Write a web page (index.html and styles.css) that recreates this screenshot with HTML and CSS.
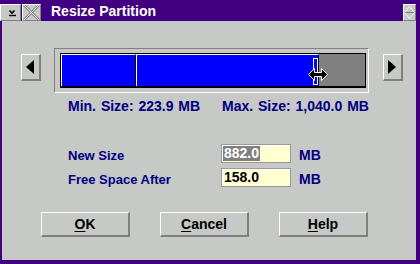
FILE: index.html
```html
<html>
<head>
<meta charset="utf-8" />
<title>Resize Partition</title>
<link rel="stylesheet" href="styles.css">
</head>
<body>
<div class="window">
	<div class="titlebar">
		<span class="tbtn sysmenu"><svg width="19" height="15">
			<polyline points="8.5,5.5 11,8 13.5,5.5" style="fill:none;stroke:black;stroke-width:1.6"/>
			<line x1="8" y1="10.5" x2="15" y2="10.5" style="stroke:black;stroke-width:1.4"/>
		</svg></span>
		<span class="tbtn close"><svg width="17" height="15">
			<line x1="1" y1="0" x2="16" y2="15" style="stroke:#8c8c8c;stroke-width:2.5"/>
			<line x1="16" y1="0" x2="1" y2="15" style="stroke:#8c8c8c;stroke-width:2.5"/>
			<line x1="1" y1="0" x2="16" y2="15" style="stroke:#e8e8e8;stroke-width:1"/>
			<line x1="16" y1="0" x2="1" y2="15" style="stroke:#e8e8e8;stroke-width:1"/>
		</svg></span>
		<span class="title">Resize Partition</span>
		<span class="tbtn restore"><svg width="11" height="15">
			<polygon points="0.5,7.5 5.5,1.5 10.5,7.5 5.5,13.5" style="fill:none;stroke:#f4f4f4;stroke-width:1"/>
			<line x1="1" y1="7.5" x2="10" y2="7.5" style="stroke:#808080;stroke-width:1"/>
		</svg></span>
	</div>
	<div class="client">
		<div class="slider-row">
			<button class="arrow"><svg width="8" height="14"><polygon points="8,0 0,7 8,14" style="fill:black"/></svg></button>
			<div class="track-frame">
				<div class="track">
					<div class="seg used" style="width:75px"></div>
					<div class="seg current" style="width:183px"></div>
					<div class="seg free"></div>
					<span class="handle"></span>
					<svg class="cursor" width="20" height="13">
						<polygon points="0.5,6.5 6.5,0.5 6.5,4.5 13.5,4.5 13.5,0.5 19.5,6.5 13.5,12.5 13.5,8.5 6.5,8.5 6.5,12.5" style="fill:black;stroke:white;stroke-width:1"/>
					</svg>
				</div>
			</div>
			<button class="arrow right"><svg width="8" height="14"><polygon points="0,0 8,7 0,14" style="fill:black"/></svg></button>
		</div>
		<div class="limits">
			<span class="limit-min">Min. Size: 223.9 MB</span>
			<span>Max. Size: 1,040.0 MB</span>
		</div>
		<div class="fields">
			<label class="field-label">New Size</label>
			<div class="entry"><span class="selected">882.0</span></div>
			<span class="unit">MB</span>
			<label class="field-label">Free Space After</label>
			<div class="entry">158.0</div>
			<span class="unit">MB</span>
		</div>
		<div class="buttons">
			<button class="push"><u>O</u>K</button>
			<button class="push"><u>C</u>ancel</button>
			<button class="push"><u>H</u>elp</button>
		</div>
	</div>
</div>
</body>
</html>
```

FILE: styles.css
```css
body {
	margin: 0;
	font-family: "Liberation Sans", Arial, sans-serif;
	font-weight: bold;
	font-size: 14px;
}

.window {
	width: 420px;
	height: 264px;
	box-sizing: border-box;
	background-color: #40007f;
	padding: 0px 4px 4px 2px;
	display: flex;
	flex-direction: column;
}

.titlebar {
	height: 21px;
	display: flex;
	align-items: flex-end;
	margin-left: -2px;
}

.tbtn {
	height: 17px;
	box-sizing: border-box;
	background-color: #c6c9c6;
	border-top: 1px solid #ffffff;
	border-left: 1px solid #ffffff;
	border-right: 1px solid #808080;
	border-bottom: 1px solid #808080;
	display: flex;
}

.tbtn svg {
	display: block;
}

.sysmenu {
	width: 21px;
}

.close {
	width: 19px;
	margin-left: 1px;
}

.restore {
	width: 13px;
	margin-left: auto;
}

.title {
	color: #ffffff;
	margin-left: 10px;
	align-self: stretch;
	line-height: 21px;
	padding-top: 1px;
}

.client {
	flex: 1;
	background-color: #c6c9c6;
	padding: 27px 0px 0px 19px;
}

.slider-row {
	display: flex;
	align-items: flex-start;
}

.arrow {
	width: 20px;
	height: 27px;
	margin-top: 6px;
	padding: 0px;
	box-sizing: border-box;
	background-color: #c6c9c6;
	border-top: 1px solid #ffffff;
	border-left: 1px solid #ffffff;
	border-right: 2px solid #808080;
	border-bottom: 2px solid #808080;
	display: flex;
	align-items: center;
	justify-content: center;
}

.arrow svg {
	display: block;
	margin-left: -1px;
}

.track-frame {
	width: 315px;
	height: 45px;
	box-sizing: border-box;
	margin: 0px 14px 0px 13px;
	border-top: 1px solid #808080;
	border-left: 1px solid #808080;
	border-right: 1px solid #ffffff;
	border-bottom: 1px solid #ffffff;
	padding: 4px 2px 4px 5px;
}

.track {
	position: relative;
	height: 35px;
	box-sizing: border-box;
	border: 1px solid #000000;
	border-bottom-width: 2px;
	display: flex;
	background-color: #808080;
}

.seg {
	box-sizing: border-box;
	height: 100%;
}

.used, .current {
	background-color: #0000ff;
	border-top: 1px solid #ffffff;
	border-left: 1px solid #ffffff;
	border-right: 1px solid #000000;
}

.free {
	flex: 1;
	background-color: #808080;
}

.handle {
	position: absolute;
	left: 252px;
	top: 4px;
	width: 5px;
	height: 27px;
	box-sizing: border-box;
	border: 1px solid #ffffff;
	background-color: #0000ff;
}

.cursor {
	position: absolute;
	left: 247px;
	top: 14px;
}

.limits {
	display: flex;
	color: #000080;
	margin: 5px 0px 0px 47px;
	line-height: 16px;
	word-spacing: 1px;
}

.limit-min {
	width: 154px;
}

.fields {
	display: grid;
	grid-template-columns: 153px 70px auto;
	grid-auto-rows: 19px;
	row-gap: 5px;
	margin: 30px 0px 0px 47px;
	color: #000080;
}

.field-label {
	font-size: 13px;
	line-height: 19px;
	padding-top: 2px;
}

.unit {
	line-height: 19px;
	padding-top: 2px;
	margin-left: 8px;
}

.entry {
	box-sizing: border-box;
	border: 1px solid #9a9a9a;
	box-shadow: inset 1px 1px 0px #ffffff;
	background-color: #ffffd2;
	color: #000000;
	padding: 1px 0px 0px 2px;
	line-height: 15px;
}

.selected {
	display: inline-block;
	background-color: #808080;
	color: #ffffff;
	padding: 0px 1px;
	margin-left: -1px;
}

.buttons {
	display: flex;
	gap: 30px;
	margin: 25px 0px 0px 20px;
}

.push {
	width: 89px;
	height: 25px;
	box-sizing: border-box;
	background-color: #c6c9c6;
	border-top: 1px solid #ffffff;
	border-left: 1px solid #ffffff;
	border-right: 2px solid #808080;
	border-bottom: 2px solid #808080;
	font-family: "Liberation Sans", Arial, sans-serif;
	font-weight: bold;
	font-size: 14px;
	color: #000000;
	padding: 0px;
}

.push u {
	text-underline-offset: 2px;
}
```
